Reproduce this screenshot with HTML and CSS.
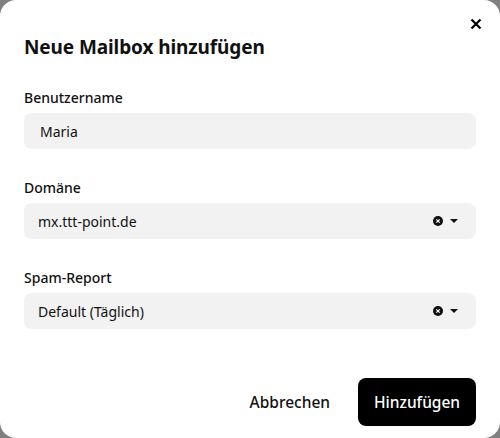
FILE: index.html
```html
<!DOCTYPE html>
<html lang="de">
<head>
<meta charset="utf-8">
<link rel="stylesheet" href="styles.css">
</head>
<body>
<div class="dialog">
  <button class="close" aria-label="Schließen">
    <svg width="12" height="12" viewBox="0 0 12 12"><path d="M1.5 1.5L10.5 10.5M10.5 1.5L1.5 10.5" stroke="#000" stroke-width="2.2" stroke-linecap="butt"/></svg>
  </button>
  <h1 class="title">Neue Mailbox hinzufügen</h1>
  <div class="field">
    <label class="label">Benutzername</label>
    <div class="input">Maria</div>
  </div>
  <div class="field">
    <label class="label">Domäne</label>
    <div class="input select">
      <span class="value">mx.ttt-point.de</span>
      <span class="icons">
        <svg width="10" height="10" viewBox="0 0 10 10"><circle cx="5" cy="5" r="5" fill="#111"/><path d="M3.3 3.3L6.7 6.7M6.7 3.3L3.3 6.7" stroke="#fff" stroke-width="1.2"/></svg>
        <svg width="8" height="4" viewBox="0 0 8 4"><path d="M0 0H8L4 4Z" fill="#111"/></svg>
      </span>
    </div>
  </div>
  <div class="field">
    <label class="label">Spam-Report</label>
    <div class="input select">
      <span class="value">Default (Täglich)</span>
      <span class="icons">
        <svg width="10" height="10" viewBox="0 0 10 10"><circle cx="5" cy="5" r="5" fill="#111"/><path d="M3.3 3.3L6.7 6.7M6.7 3.3L3.3 6.7" stroke="#fff" stroke-width="1.2"/></svg>
        <svg width="8" height="4" viewBox="0 0 8 4"><path d="M0 0H8L4 4Z" fill="#111"/></svg>
      </span>
    </div>
  </div>
  <div class="actions">
    <button class="btn cancel">Abbrechen</button>
    <button class="btn primary">Hinzufügen</button>
  </div>
</div>
</body>
</html>
```
FILE: styles.css
```css
* { box-sizing: border-box; }
html, body { margin: 0; padding: 0; }
body {
  background: #808080;
  width: 500px;
  height: 438px;
  font-family: "Noto Sans", "DejaVu Sans", sans-serif;
  color: #111;
}
.dialog {
  position: relative;
  width: 500px;
  height: 438px;
  background: #fff;
  border-radius: 16px;
  padding: 30px 24px 0 24px;
  display: flex;
  flex-direction: column;
}
.close {
  position: absolute;
  top: 18px;
  right: 18px;
  width: 12px;
  height: 12px;
  padding: 0;
  border: 0;
  background: none;
  display: flex;
}
.title {
  margin: 0;
  font-size: 19px;
  font-weight: 700;
  line-height: 34px;
  height: 34px;
  color: #111;
  letter-spacing: -0.1px;
}
.field {
  display: flex;
  flex-direction: column;
}
.title + .field { margin-top: 25px; }
.field + .field { margin-top: 30px; }
.label {
  font-size: 14px;
  font-weight: 500;
  line-height: 18px;
  height: 18px;
  margin-bottom: 6px;
  color: #111;
}
.input {
  height: 36px;
  background: #f2f2f2;
  border-radius: 8px;
  padding: 0 16px;
  display: flex;
  align-items: center;
  font-size: 14px;
  color: #111;
}
.select { padding: 0 18px 0 14px; justify-content: space-between; }
.icons { display: flex; align-items: center; gap: 7px; }
.actions {
  margin-top: auto;
  margin-bottom: 12px;
  display: flex;
  justify-content: flex-end;
  align-items: center;
  gap: 28px;
}
.btn {
  font-family: inherit;
  font-size: 15.5px;
  font-weight: 500;
  border: 0;
  height: 48px;
  border-radius: 8px;
  cursor: pointer;
}
.cancel { background: none; color: #111; padding: 0; }
.primary { background: #000; color: #fff; padding: 0 16px; width: 118px; }
```
